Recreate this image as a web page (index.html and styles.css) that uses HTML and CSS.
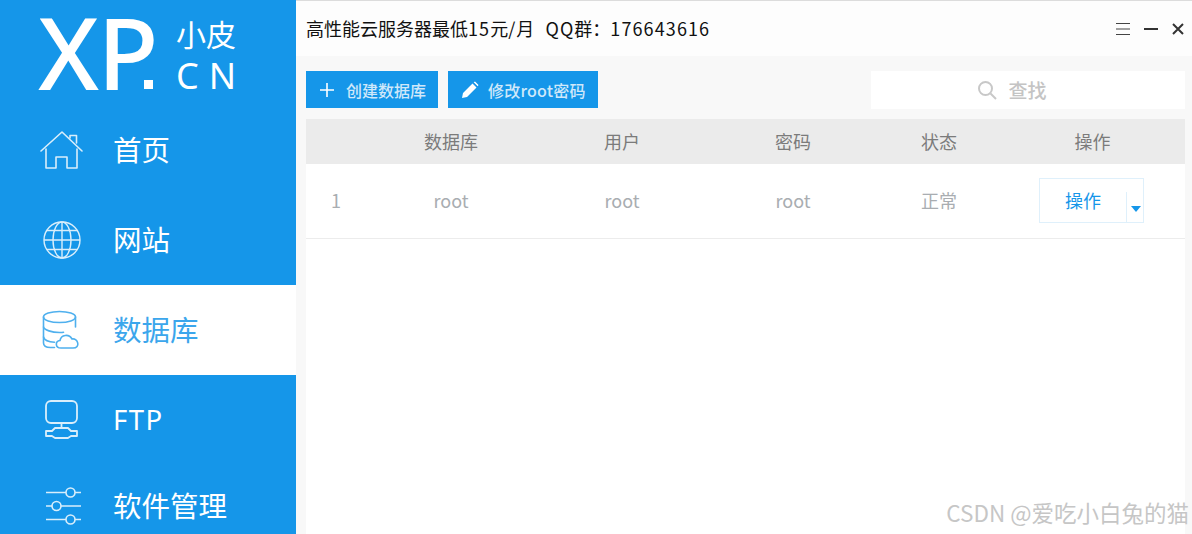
FILE: index.html
```html
<!DOCTYPE html>
<html lang="zh-CN">
<head>
    <meta charset="UTF-8">
    <title>小皮面板</title>
    <link rel="stylesheet" href="styles.css">
</head>
<body>
    <div class="app">
        <aside class="sidebar">
            <div class="logo">
                <span class="logo-mark">XP<span class="logo-dot"></span></span>
                <span class="logo-side">
                    <span class="logo-cn">小皮</span>
                    <span class="logo-en">CN</span>
                </span>
            </div>
            <nav class="nav">
                <a class="nav-item">
                    <span class="nav-icon">
                        <svg width="44" height="44" viewBox="0 0 44 44" fill="none" stroke="currentColor" stroke-width="1.6" stroke-linejoin="round" stroke-linecap="round">
                            <path d="M1 23 22 4l20 19"/>
                            <path d="M30 10V7.500h6.500V15"/>
                            <path d="M6 21V40h10V29h11V40h10V21"/>
                        </svg>
                    </span>
                    <span class="nav-text">首页</span>
                </a>
                <a class="nav-item">
                    <span class="nav-icon">
                        <svg width="44" height="44" viewBox="0 0 44 44" fill="none" stroke="currentColor" stroke-width="1.4">
                            <circle cx="22" cy="22" r="18"/>
                            <ellipse cx="22" cy="22" rx="9" ry="18"/>
                            <path d="M22 4V40M4 22H40M7 12.500H37M7 31.500H37"/>
                        </svg>
                    </span>
                    <span class="nav-text">网站</span>
                </a>
                <a class="nav-item active">
                    <span class="nav-icon">
                        <svg width="44" height="44" viewBox="0 0 44 44" fill="none" stroke="currentColor" stroke-width="1.6" stroke-linecap="round" stroke-linejoin="round">
                            <ellipse cx="19.500" cy="9" rx="16" ry="5.500"/>
                            <path d="M3.500 9V35c0 3 3 4.500 7 4.500h4"/>
                            <path d="M35.500 9V19"/>
                            <path d="M3.500 19c1 3 8 5.500 16 5.500 2 0 3 0 4-.3"/>
                            <path d="M3.500 29c1 3 5 5 11 5.300"/>
                            <path d="M21 40c-6 0-6-7-1-7.500 1-6 9-7 12-1.500 6-1 9 9 1 9z"/>
                        </svg>
                    </span>
                    <span class="nav-text">数据库</span>
                </a>
                <a class="nav-item">
                    <span class="nav-icon">
                        <svg width="44" height="44" viewBox="0 0 44 44" fill="none" stroke="currentColor" stroke-width="1.8" stroke-linejoin="round">
                            <rect x="6" y="3" width="31" height="22" rx="5"/>
                            <path d="M21.500 25V30"/>
                            <path d="M15 30H28L31 33H37V38H31L28 40H15L12 38H6V33H12Z"/>
                        </svg>
                    </span>
                    <span class="nav-text nav-latin">FTP</span>
                </a>
                <a class="nav-item nav-last">
                    <span class="nav-icon">
                        <svg width="44" height="44" viewBox="0 0 44 44" fill="none" stroke="currentColor" stroke-width="1.6">
                            <path d="M6 8.500H26M35 8.500H41M6 22H12M21 22H41M6 35.500H26M35 35.500H41"/>
                            <circle cx="30.500" cy="8.500" r="4.500"/>
                            <circle cx="16.500" cy="22" r="4.500"/>
                            <circle cx="30.500" cy="35.500" r="4.500"/>
                        </svg>
                    </span>
                    <span class="nav-text">软件管理</span>
                </a>
            </nav>
        </aside>

        <main class="main">
            <header class="topbar">
                <span class="notice">高性能云服务器最低<span class="notice-latin">15</span>元<span class="notice-latin">/</span>月&nbsp;&nbsp;<span class="notice-latin notice-qq">QQ</span>群：<span class="notice-latin">176643616</span></span>
                <div class="window-btns">
                    <svg width="14" height="12" viewBox="0 0 14 12" stroke="#444" stroke-width="1"><path d="M0 .5H14M0 6H14M0 11.500H14"/></svg>
                    <svg width="14" height="12" viewBox="0 0 14 12" stroke="#333" stroke-width="2"><path d="M0 6H14"/></svg>
                    <svg width="12" height="12" viewBox="0 0 12 12" stroke="#333" stroke-width="2"><path d="M1 1 11 11M11 1 1 11"/></svg>
                </div>
            </header>

            <section class="content">
                <div class="toolbar">
                    <button class="btn">
                        <svg width="16" height="16" viewBox="0 0 16 16" stroke="#fff" stroke-width="1.6"><path d="M8 1V15M1 8H15"/></svg>
                        <span class="btn-label">创建数据库</span>
                    </button>
                    <button class="btn btn-edit">
                        <svg width="18" height="18" viewBox="0 0 18 18" fill="#fff"><path d="M1 17 2 12 11.500 2.500 15.500 6.500 6 16ZM12.700 1.300 14 0.500 17.500 4 16.700 5.300Z"/></svg>
                        <span class="btn-label">修改root密码</span>
                    </button>
                    <div class="search">
                        <svg width="20" height="20" viewBox="0 0 20 20" fill="none" stroke="#c8c8c8" stroke-width="2"><circle cx="8.500" cy="8.500" r="6.500"/><path d="M13.500 13.500 19 19"/></svg>
                        <span class="search-text">查找</span>
                    </div>
                </div>

                <div class="table">
                    <div class="row row-head">
                        <div></div>
                        <div>数据库</div>
                        <div>用户</div>
                        <div>密码</div>
                        <div>状态</div>
                        <div>操作</div>
                    </div>
                    <div class="row">
                        <div>1</div>
                        <div>root</div>
                        <div>root</div>
                        <div>root</div>
                        <div>正常</div>
                        <div class="op-cell">
                            <div class="op-btn">
                                <span class="op-label">操作</span>
                                <span class="op-caret"></span>
                            </div>
                        </div>
                    </div>
                </div>
            </section>
        </main>
    </div>
    <div class="watermark">CSDN @爱吃小白兔的猫</div>
</body>
</html>
```

FILE: styles.css
```css
:root {
    --blue: #1596e9;
    --grey-text: #a9adb1;
}

* {
    box-sizing: border-box;
}

html, body {
    height: 100%;
    overflow: hidden;
}

body {
    margin: 0;
    font-family: "Noto Sans CJK SC", "Noto Sans", sans-serif;
    background-color: #fff;
}

.app {
    display: flex;
    height: 534px;
}

.sidebar {
    width: 296px;
    flex-shrink: 0;
    background-color: var(--blue);
    color: #fff;
}

.logo {
    height: 105px;
    padding: 1px 0 0 38px;
    display: flex;
    align-items: flex-start;
}

.logo-mark {
    font-family: "Noto Sans", sans-serif;
    font-size: 100px;
    font-weight: 500;
    line-height: 100px;
    letter-spacing: -1.500px;
    display: flex;
    align-items: flex-end;
    margin-right: 23px;
}

.logo-dot {
    width: 9px;
    height: 9px;
    margin: 0 0 12px -13px;
    background-color: #fff;
}

.logo-side {
    display: flex;
    flex-direction: column;
    margin-top: 14px;
    font-weight: 400;
}

.logo-cn {
    font-size: 30px;
    line-height: 36px;
}

.logo-en {
    font-family: "Noto Sans", sans-serif;
    font-size: 36px;
    line-height: 40px;
    letter-spacing: 10px;
    margin-top: 5px;
}

.nav-item {
    display: flex;
    align-items: center;
    height: 90px;
    padding-left: 40px;
    color: #fff;
}

.nav-item.active {
    background-color: #fff;
    color: var(--blue);
}

.nav-item.active .nav-text {
    color: #3ba6ec;
}

.nav-last {
    padding-bottom: 8px;
}

.nav-icon {
    width: 73px;
    height: 44px;
    color: #d9eefb;
}

.nav-item.active .nav-icon {
    color: #4fb0ee;
}

.nav-text {
    font-size: 28.500px;
    line-height: 1;
    padding-bottom: 2px;
}

.nav-latin {
    font-family: "Noto Sans", sans-serif;
    font-size: 27.500px;
    letter-spacing: 1.500px;
    padding-bottom: 0;
}

.main {
    flex: 1;
    display: flex;
    flex-direction: column;
    min-width: 0;
}

.topbar {
    height: 56px;
    display: flex;
    align-items: center;
    justify-content: space-between;
    padding: 0 8px 0 10px;
    background-color: #fdfdfd;
    border-top: 1px solid #dcdcdc;
}

.notice {
    font-size: 18px;
    line-height: 24px;
    padding-bottom: 2px;
    color: #111;
    white-space: nowrap;
}

.notice-latin {
    letter-spacing: 1.100px;
}

.notice-qq {
    margin-left: 3px;
}

.window-btns {
    display: flex;
    align-items: center;
    gap: 14px;
}

.content {
    flex: 1;
    padding: 15px 7px 0 10px;
    background-color: #f8f8f8;
    display: flex;
    flex-direction: column;
}

.toolbar {
    display: flex;
    align-items: flex-start;
    gap: 10px;
    margin-bottom: 10px;
}

.btn {
    display: flex;
    align-items: center;
    width: 132px;
    height: 37px;
    padding: 0 0 0 13px;
    border: none;
    background-color: var(--blue);
    color: #cfe8fa;
    font-family: inherit;
    cursor: pointer;
}

.btn-edit {
    width: 150px;
}

.btn-label {
    font-size: 16px;
    font-weight: 500;
    margin-left: 11px;
    white-space: nowrap;
}

.btn-edit .btn-label {
    margin-left: 9px;
    letter-spacing: .2px;
}

.search {
    margin-left: auto;
    width: 314px;
    height: 38px;
    padding-bottom: 1px;
    display: flex;
    align-items: center;
    justify-content: center;
    gap: 11px;
    background-color: #fff;
}

.search svg {
    margin-left: -32px;
}

.search-text {
    font-size: 19px;
    font-weight: 500;
    color: #c4c4c4;
}

.table {
    flex: 1;
    background-color: #fff;
}

.row {
    display: grid;
    grid-template-columns: 60px 170px 172px 170px 122px 185px;
    align-items: center;
    height: 75px;
    padding-bottom: 2px;
    border-bottom: 1px solid #ececec;
    font-size: 18px;
    color: var(--grey-text);
    text-align: center;
}

.row-head {
    height: 45px;
    background-color: #ebebeb;
    border-bottom: none;
    color: #7b7b7b;
}

.op-cell {
    display: flex;
    padding-left: 39px;
}

.op-btn {
    position: relative;
    width: 105px;
    height: 45px;
    display: flex;
    border: 1px solid #dff0fb;
    background-color: #fff;
}

.op-label {
    width: 86px;
    line-height: 43px;
    color: var(--blue);
}

.op-caret {
    position: absolute;
    left: 86px;
    top: 13px;
    bottom: 0;
    width: 18px;
    border-left: 1px solid #dff0fb;
}

.op-caret::after {
    content: "";
    position: absolute;
    left: 4px;
    top: 14px;
    border-left: 5px solid transparent;
    border-right: 5px solid transparent;
    border-top: 6px solid var(--blue);
}

.watermark {
    position: absolute;
    right: 3px;
    bottom: 7px;
    font-size: 22.500px;
    line-height: 30px;
    color: #c6c6c6;
    white-space: nowrap;
}
```
